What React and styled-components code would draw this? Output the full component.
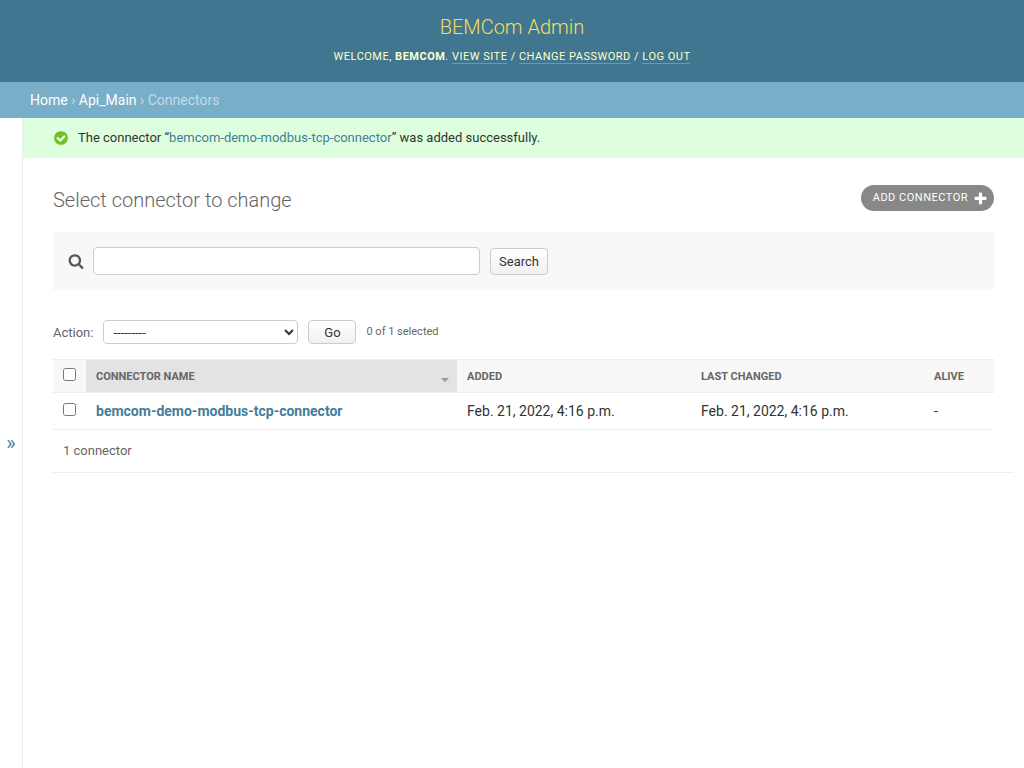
import React from "react";
import styled, { createGlobalStyle } from "styled-components";

const GlobalStyle = createGlobalStyle`
  html, body {
    margin: 0;
    padding: 0;
    height: 100%;
  }
  body {
    font-family: Roboto, "Liberation Sans", sans-serif;
    font-size: 14px;
    color: #333;
    background: #fff;
  }
`;

const App = () => {
  return (
    <Page>
      <GlobalStyle />
      <Header>
        <Branding>BEMCom Admin</Branding>
        <UserTools>
          Welcome, <strong>BEMCom</strong>. <ToolLink href="#">View site</ToolLink> /{" "}
          <ToolLink href="#">Change password</ToolLink> / <ToolLink href="#">Log out</ToolLink>
        </UserTools>
      </Header>
      <Breadcrumbs>
        <a href="#">Home</a> › <a href="#">Api_Main</a> › Connectors
      </Breadcrumbs>
      <Main>
        <SidebarToggle>»</SidebarToggle>
        <ContentColumn>
          <Message>
            <svg width="16" height="16" viewBox="0 0 1792 1792">
              <path
                fill="#70bf2b"
                d="M1412 734q0-28-18-46l-91-90q-19-19-45-19t-45 19l-408 407-226-226q-19-19-45-19t-45 19l-91 90q-18 18-18 46 0 27 18 45l362 362q19 19 45 19 27 0 46-19l543-543q18-18 18-45zm252 162q0 209-103 385.500t-279.500 279.500-385.500 103-385.500-103-279.500-279.500-103-385.500 103-385.500 279.500-279.500 385.500-103 385.500 103 279.500 279.500 103 385.500z"
              />
            </svg>
            <MessageText>
              The connector “<MessageLink href="#">bemcom-demo-modbus-tcp-connector</MessageLink>” was added
              successfully.
            </MessageText>
          </Message>
          <Content>
            <TitleRow>
              <Title>Select connector to change</Title>
              <AddButton href="#">
                Add connector
                <svg width="15" height="15" viewBox="0 0 1792 1792">
                  <path
                    fill="#fff"
                    d="M1600 796v192q0 40-28 68t-68 28h-416v416q0 40-28 68t-68 28h-192q-40 0-68-28t-28-68v-416h-416q-40 0-68-28t-28-68v-192q0-40 28-68t68-28h416v-416q0-40 28-68t68-28h192q40 0 68 28t28 68v416h416q40 0 68 28t28 68z"
                  />
                </svg>
              </AddButton>
            </TitleRow>
            <SearchBar>
              <svg width="16" height="16" viewBox="0 0 1792 1792">
                <path
                  fill="#555"
                  d="M1216 832q0-185-131.500-316.500t-316.500-131.500-316.500 131.500-131.500 316.500 131.500 316.500 316.500 131.500 316.500-131.500 131.500-316.500zm512 832q0 52-38 90t-90 38q-54 0-90-38l-343-342q-179 124-399 124-143 0-273.500-55.500t-225-150-150-225-55.500-273.500 55.500-273.500 150-225 225-150 273.500-55.500 273.500 55.500 225 150 150 225 55.500 273.500q0 220-124 399l343 343q37 37 37 90z"
                />
              </svg>
              <SearchInput type="text" />
              <SearchButton>Search</SearchButton>
            </SearchBar>
            <Actions>
              <ActionLabel>Action:</ActionLabel>
              <ActionSelect defaultValue="">
                <option value="">---------</option>
              </ActionSelect>
              <GoButton>Go</GoButton>
              <SelectedCount>0 of 1 selected</SelectedCount>
            </Actions>
            <Table>
              <thead>
                <tr>
                  <CheckHead>
                    <Check type="checkbox" />
                  </CheckHead>
                  <HeadCell $width={371} $sorted>
                    Connector name
                    <SortArrow />
                  </HeadCell>
                  <HeadCell $width={234}>Added</HeadCell>
                  <HeadCell $width={233}>Last changed</HeadCell>
                  <HeadCell $width={70}>Alive</HeadCell>
                </tr>
              </thead>
              <tbody>
                <tr>
                  <CheckCell>
                    <Check type="checkbox" />
                  </CheckCell>
                  <NameCell>
                    <a href="#">bemcom-demo-modbus-tcp-connector</a>
                  </NameCell>
                  <Cell>Feb. 21, 2022, 4:16 p.m.</Cell>
                  <Cell>Feb. 21, 2022, 4:16 p.m.</Cell>
                  <Cell>-</Cell>
                </tr>
              </tbody>
            </Table>
            <Paginator>1 connector</Paginator>
          </Content>
        </ContentColumn>
      </Main>
    </Page>
  );
};

const Page = styled.div`
  display: flex;
  flex-direction: column;
  min-height: 100vh;
`;
const Header = styled.div`
  display: flex;
  flex-direction: column;
  align-items: center;
  height: 82px;
  box-sizing: border-box;
  padding-top: 15px;
  background: #417690;
  color: #ffc;
`;
const Branding = styled.h1`
  margin: 0;
  font-size: 20px;
  line-height: 24px;
  font-weight: 300;
  color: #f5dd5d;
`;
const UserTools = styled.div`
  margin-top: 10px;
  font-size: 11px;
  line-height: 16px;
  letter-spacing: 0.5px;
  text-transform: uppercase;
  strong {
    font-weight: 700;
  }
`;
const ToolLink = styled.a`
  color: #ffc;
  text-decoration: none;
  border-bottom: 1px solid rgba(255, 255, 255, 0.25);
`;
const Breadcrumbs = styled.div`
  height: 36px;
  box-sizing: border-box;
  padding: 0 30px;
  background: #79aec8;
  color: #c4dce8;
  font-size: 14px;
  line-height: 36px;
  a {
    color: #fff;
    text-decoration: none;
  }
`;
const Main = styled.div`
  display: flex;
  flex: 1;
`;
const SidebarToggle = styled.div`
  width: 23px;
  box-sizing: border-box;
  flex: none;
  display: flex;
  align-items: center;
  justify-content: center;
  border-right: 1px solid #eaeaea;
  color: #447e9b;
  font-size: 20px;
`;
const ContentColumn = styled.div`
  flex: 1;
  min-width: 0;
`;
const Message = styled.div`
  display: flex;
  align-items: center;
  gap: 9px;
  height: 40px;
  box-sizing: border-box;
  padding-left: 30px;
  background: #dfd;
  font-size: 13px;
`;
const MessageText = styled.span`
  margin-bottom: 2px;
`;
const MessageLink = styled.a`
  color: #447e9b;
  text-decoration: none;
`;
const Content = styled.div`
  padding: 27px 10px 0 30px;
`;
const TitleRow = styled.div`
  display: flex;
  justify-content: space-between;
  align-items: center;
  height: 26px;
  padding-right: 20px;
`;
const Title = styled.h1`
  margin: 4px 0 0;
  font-size: 20px;
  font-weight: 300;
  color: #666;
`;
const AddButton = styled.a`
  display: flex;
  align-items: center;
  gap: 5px;
  height: 26px;
  box-sizing: border-box;
  padding: 0 6px 1px 12px;
  border-radius: 15px;
  background: #888;
  color: #fff;
  font-size: 11px;
  letter-spacing: 0.5px;
  text-transform: uppercase;
  text-decoration: none;
  svg {
    margin-top: 1px;
  }
`;
const SearchBar = styled.div`
  display: flex;
  align-items: center;
  height: 58px;
  box-sizing: border-box;
  margin: 21px 20px 0 0;
  padding-left: 15px;
  background: #f8f8f8;
`;
const SearchInput = styled.input`
  width: 387px;
  height: 28px;
  box-sizing: border-box;
  margin-left: 9px;
  padding: 2px 5px;
  border: 1px solid #ccc;
  border-radius: 4px;
  background: #fff;
`;
const Button = styled.button`
  box-sizing: border-box;
  border: 1px solid #ccc;
  border-radius: 4px;
  background: linear-gradient(#fff, #f0f0f0);
  color: #333;
  font-family: inherit;
  font-size: 13px;
  padding: 0;
`;
const SearchButton = styled(Button)`
  width: 58px;
  height: 27px;
  margin-left: 10px;
`;
const Actions = styled.div`
  display: flex;
  align-items: center;
  height: 24px;
  margin-top: 30px;
`;
const ActionLabel = styled.label`
  font-size: 13px;
  color: #666;
`;
const ActionSelect = styled.select`
  width: 195px;
  height: 24px;
  box-sizing: border-box;
  margin-left: 10px;
  padding: 0 5px;
  border: 1px solid #ccc;
  border-radius: 4px;
  background: #fff;
  color: #333;
  font-family: inherit;
  font-size: 13px;
`;
const GoButton = styled(Button)`
  width: 48px;
  height: 24px;
  margin-left: 10px;
`;
const SelectedCount = styled.span`
  margin: 0 0 2px 10px;
  font-size: 11px;
  color: #666;
`;
const Table = styled.table`
  width: 941px;
  margin-top: 15px;
  border-collapse: collapse;
  table-layout: fixed;
`;
const HeadCell = styled.th`
  position: relative;
  width: ${(props) => props.$width}px;
  height: 33px;
  box-sizing: border-box;
  padding: 0 10px;
  border-top: 1px solid #eee;
  border-bottom: 1px solid #eee;
  background: ${(props) => (props.$sorted ? "#e3e3e3" : "#f8f8f8")};
  color: #666;
  font-size: 11px;
  font-weight: 700;
  text-align: left;
  text-transform: uppercase;
`;
const CheckHead = styled.th`
  width: 33px;
  padding: 0;
  border-top: 1px solid #eee;
  border-bottom: 1px solid #eee;
  background: #f8f8f8;
  text-align: center;
`;
const SortArrow = styled.span`
  position: absolute;
  right: 8px;
  top: 18px;
  border-left: 4px solid transparent;
  border-right: 4px solid transparent;
  border-top: 4px solid #999;
`;
const Check = styled.input`
  display: block;
  margin: -4px auto 0;
`;
const Cell = styled.td`
  height: 37px;
  box-sizing: border-box;
  padding: 0 10px;
  border-bottom: 1px solid #eee;
  font-size: 14px;
  color: #333;
`;
const CheckCell = styled(Cell)`
  padding: 0;
`;
const NameCell = styled(Cell)`
  font-weight: 700;
  a {
    color: #447e9b;
    text-decoration: none;
  }
`;
const Paginator = styled.div`
  height: 42px;
  padding-left: 10px;
  border-bottom: 1px solid #eee;
  color: #666;
  font-size: 13px;
  line-height: 42px;
`;

export default App;
